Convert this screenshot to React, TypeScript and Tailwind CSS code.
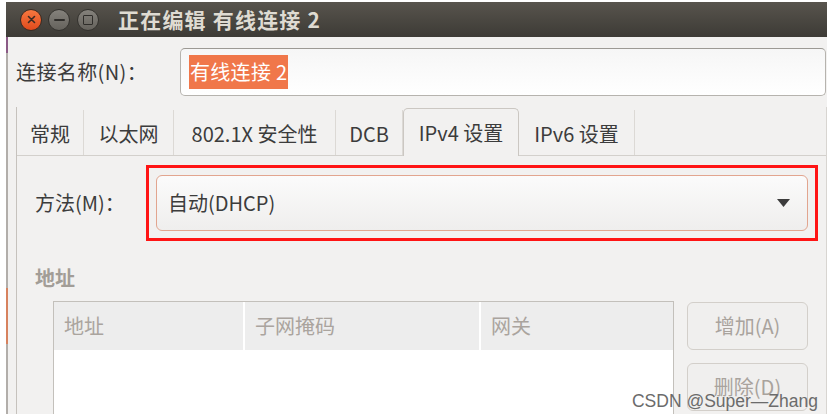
const font = {
  fontFamily: '"Noto Sans CJK SC", "Noto Sans", sans-serif',
};

const tabs = [
  { label: "常规", w: "w-[67px]" },
  { label: "以太网", w: "w-[90px]" },
  { label: "802.1X 安全性", w: "w-[162px]" },
  { label: "DCB", w: "w-[67px]" },
  { label: "IPv4 设置", w: "w-[116px]", active: true },
  { label: "IPv6 设置", w: "w-[116px]" },
];

const columns = [
  { label: "地址", w: "w-[189px]" },
  { label: "子网掩码", w: "w-[234px]" },
  { label: "网关", w: "flex-1" },
];

const TitleBar = () => (
  <div className="h-[35px] flex items-center bg-gradient-to-b from-[#58544d] to-[#3d3b36] pl-[14px]">
    <div className="w-[22px] h-[22px] rounded-full bg-gradient-to-b from-[#f7773f] to-[#df4a1c] flex items-center justify-center border border-[#3a2a22]">
      <svg width="9" height="9" viewBox="0 0 9 9">
        <path d="M1.5 1.5 L7.5 7.5 M7.5 1.5 L1.5 7.5" stroke="#3a2a22" strokeWidth="1.6" strokeLinecap="round" />
      </svg>
    </div>
    <div className="ml-[6px] w-[22px] h-[22px] rounded-full bg-gradient-to-b from-[#85827c] to-[#65625c] flex items-center justify-center border border-[#34322e]">
      <div className="w-[11px] h-[2px] bg-[#2f2d2a] rounded" />
    </div>
    <div className="ml-[7px] w-[22px] h-[22px] rounded-full bg-gradient-to-b from-[#85827c] to-[#65625c] flex items-center justify-center border border-[#34322e]">
      <div className="w-[10px] h-[10px] border-[1.5px] border-[#2f2d2a] rounded-[1px]" />
    </div>
    <span className="ml-[19px] text-[21px] font-bold text-[#dfdbd2] tracking-[1.2px]">
      正在编辑 有线连接 2
    </span>
  </div>
);

export default function App() {
  return (
    <div className="w-[834px] h-[414px] bg-white overflow-hidden pt-[2px] pl-[6px] pr-[7px] relative" style={font}>
      <div className="flex flex-col h-full">
        <TitleBar />
        <div className="flex flex-1">
          {/* window left edge */}
          <div className="w-[2px] flex flex-col">
            <div className="h-[16px] bg-[#8b5a86]" />
            <div className="h-[235px] bg-[#b2aeaa]" />
            <div className="h-[56px] bg-[#d7825e]" />
            <div className="flex-1 bg-[#b2aeaa]" />
          </div>
          <div className="flex-1 bg-[#f2f1f0] flex flex-col">
            {/* connection name */}
            <div className="h-[70px] flex items-center pl-[8px]">
              <span className="w-[164px] text-[20px] text-[#3c3c3c] tracking-[0.4px]">连接名称(N)：</span>
              <div className="flex-1 h-[48px] mr-[1px] rounded-[5px] border border-[#b6b3ae] border-t-[#9c9994] bg-gradient-to-b from-[#f6f6f6] to-white flex items-center pl-[8px]">
                <span className="bg-[#f0774a] text-white text-[20px] leading-[34px] px-[1px] tracking-[0.3px]">有线连接 2</span>
              </div>
            </div>

            {/* notebook */}
            <div className="flex-1 flex flex-col ml-[8px] border-l border-[#c6c2bd] border-r border-r-[#d8d5d1]">
              <div className="h-[48px] flex items-end">
                {tabs.map((t) =>
                  t.active ? (
                    <div
                      key={t.label}
                      className={`${t.w} h-[48px] flex items-center justify-center rounded-t-[5px] border border-b-0 border-[#cbc7c2] bg-[#f2f1f0] text-[20px] text-[#3c3c3c] -mb-px relative z-10`}
                    >
                      {t.label}
                    </div>
                  ) : (
                    <div
                      key={t.label}
                      className={`${t.w} h-[45px] flex items-center justify-center border-r border-[#dcd9d5] text-[20px] text-[#3c3c3c] pt-[2px]`}
                    >
                      {t.label}
                    </div>
                  )
                )}
              </div>
              <div className="flex-1 border-t border-[#d3d0cc] flex flex-col">
                {/* method row */}
                <div className="flex items-center mt-[9px]">
                  <span className="w-[129px] pl-[18px] text-[20px] text-[#3c3c3c]">方法(M)：</span>
                  <div className="flex-1 mr-[8px] border-[3px] border-[#ff1414] p-[7px]">
                    <div className="h-[56px] rounded-[6px] border border-[#e2a58f] bg-gradient-to-b from-[#fbfbfb] to-[#efeeed] flex items-center pl-[11px] pr-[17px]">
                      <span className="flex-1 text-[20px] text-[#3c3c3c]">自动(DHCP)</span>
                      <svg width="13" height="8" viewBox="0 0 13 8">
                        <path d="M0 0 H13 L6.5 8 Z" fill="#3c3c3c" />
                      </svg>
                    </div>
                  </div>
                </div>

                {/* addresses */}
                <div className="mt-[24px] pl-[18px] text-[20px] font-bold text-[#a29d97] leading-[26px]">地址</div>
                <div className="flex mt-[10px] ml-[36px] mr-[18px] flex-1">
                  <div className="w-[621px] border border-[#c3c0bb] border-b-0 bg-white flex flex-col">
                    <div className="h-[48px] flex gap-[2px] bg-white">
                      {columns.map((c) => (
                        <div
                          key={c.label}
                          className={`${c.w} bg-[#ededed] flex items-center pl-[10px] text-[20px] text-[#aaa49e]`}
                        >
                          {c.label}
                        </div>
                      ))}
                    </div>
                  </div>
                  <div className="ml-[13px] flex-1 flex flex-col gap-[13px] pt-[1px]">
                    <div className="h-[48px] rounded-[6px] border border-[#d3cfca] bg-[#f0efee] flex items-center justify-center text-[20px] text-[#a9a39d]">
                      增加(A)
                    </div>
                    <div className="h-[48px] rounded-[6px] border border-[#d3cfca] bg-[#f0efee] flex items-center justify-center text-[20px] text-[#a9a39d]">
                      删除(D)
                    </div>
                  </div>
                </div>
              </div>
            </div>
          </div>
        </div>
      </div>
      <div
        className="absolute right-[16px] bottom-[1px] text-[17.5px] text-[#6b6b6b] leading-[24px]"
        style={{ fontFamily: '"Liberation Sans", Arial, sans-serif' }}
      >
        CSDN @Super—Zhang
      </div>
    </div>
  );
}
